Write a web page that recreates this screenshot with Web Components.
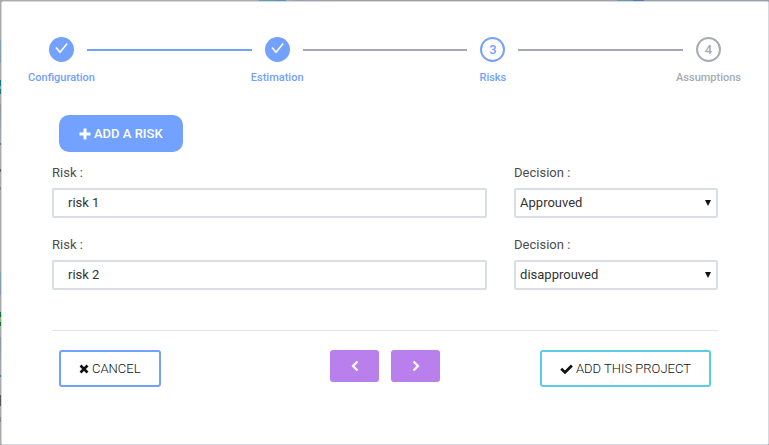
<!DOCTYPE html>
<html lang="en">
<head>
<meta charset="utf-8">
<title>Add a project</title>
<style>
  body { margin: 0; font-family: Roboto, "Liberation Sans", sans-serif; font-size: 13px; color: #444; }
</style>
</head>
<body>
<project-dialog>
  <step-list slot="steps">
    <step-item state="done" number="1">Configuration</step-item>
    <step-item state="done" number="2">Estimation</step-item>
    <step-item state="current" number="3">Risks</step-item>
    <step-item state="todo" number="4">Assumptions</step-item>
  </step-list>
  <action-button kind="solid" icon="plus" slot="toolbar">ADD A RISK</action-button>
  <risk-row value="risk 1" decision="Approuved"></risk-row>
  <risk-row value="risk 2" decision="disapprouved"></risk-row>
  <action-button kind="cancel" icon="cross" slot="start">CANCEL</action-button>
  <action-button kind="nav" icon="left" label="Previous" slot="nav"></action-button>
  <action-button kind="nav" icon="right" label="Next" slot="nav"></action-button>
  <action-button kind="confirm" icon="check" slot="end">ADD THIS PROJECT</action-button>
</project-dialog>

<script>
const shadow = (el, html) => { el.attachShadow({ mode: 'open' }).innerHTML = html; return el.shadowRoot; };

customElements.define('project-dialog', class extends HTMLElement {
  connectedCallback() {
    shadow(this, `
      <style>
        * { box-sizing: border-box; }
        /* dimmed page strip showing round the dialog */
        :host {
          display: flex; box-sizing: border-box; min-height: 100vh; padding: 1px 0 0 1px;
          background:
            linear-gradient(90deg, #ababab 259px, #5d9fae 259px 275px, #5f8fc0 275px 286px, #ababab 286px 293px, #9ca3ae 293px 321px, #a2a2a2 321px 617px, #5d9fae 617px 633px, #5579b0 633px 644px, #9b9fa5 644px) 0 0 / 100% 1px no-repeat,
            linear-gradient(#ababab 40px, #7ba6ad 40px, #8c96b0 63px, #ababab 63px 80px, #0f7b85 80px 86px, #8fa9ab 86px 89px, #0f7b85 89px 94px, #ababab 94px 104px, #8f979e 104px, #a5a9ae 143px, #4a70c4 143px 145px, #ababab 145px 169px, #666 169px 172px, #ababab 172px 187px, #888 187px 190px, #ababab 190px 272px, #7ba6ad 272px, #8c96b0 295px, #ababab 295px 312px, #12782f 312px 317px, #8fab95 317px 322px, #12782f 322px 326px, #ababab 326px 337px, #8f979e 337px, #a5a9ae 375px, #4a70c4 375px 377px, #ababab 377px 395px, #555 395px 406px, #ababab 406px 417px, #888 417px 422px, #ababab 422px) 0 0 / 1px 100% no-repeat,
            #a5a5a5;
        }
        main { flex: 1; min-width: 0; background: #fff; border: 1px solid #d5d8df; border-radius: 2px; padding: 35px 50px 56px; }
        .steps { margin: 0 -3px; }
        .toolbar { display: flex; padding: 30px 7px 13px; }
        .rows { display: grid; gap: 19px; }
        hr { border: 0; border-top: 1px solid #e3e4e6; margin: 40px 0 19px; }
        footer { display: grid; grid-template-columns: 1fr auto 1fr; align-items: start; padding: 0 7px; }
        nav { display: flex; gap: 12px; }
        .end { justify-self: end; }
      </style>
      <main>
        <div class="steps"><slot name="steps"></slot></div>
        <div class="toolbar"><slot name="toolbar"></slot></div>
        <div class="rows"><slot></slot></div>
        <hr>
        <footer>
          <div><slot name="start"></slot></div>
          <nav><slot name="nav"></slot></nav>
          <div class="end"><slot name="end"></slot></div>
        </footer>
      </main>`);
  }
});

customElements.define('step-list', class extends HTMLElement {
  connectedCallback() {
    shadow(this, `<style>:host { display: flex; }</style><slot></slot>`);
  }
});

customElements.define('step-item', class extends HTMLElement {
  connectedCallback() {
    const done = this.getAttribute('state') === 'done';
    const mark = done
      ? `<svg width="15" height="15" viewBox="0 0 15 15" aria-hidden="true"><path d="M2 6.6 6 11.2 13.2 2.6" fill="none" stroke="#fff" stroke-width="1.6"/></svg>`
      : this.getAttribute('number');
    shadow(this, `
      <style>
        :host { display: flex; flex: 0 0 auto; --tone: #73a1ff; --line: #a1a8b3; }
        :host(:not(:first-child)) { flex: 1 1 0; }
        :host([state="todo"]) { --tone: #a6abb4; }
        :host(:nth-child(2)) { --line: #73a1ff; }
        :host(:first-child) .line { display: none; }
        .line { flex: 1; height: 2px; margin: 12px 13px 0; background: var(--line); }
        .step { width: 25px; display: flex; flex-direction: column; align-items: center; gap: 8px; color: var(--tone); font-weight: 500; }
        .mark { box-sizing: border-box; width: 25px; height: 25px; border: 2px solid var(--tone); border-radius: 50%; display: flex; align-items: center; justify-content: center; font-size: 13px; line-height: 21px; }
        :host([state="done"]) .mark { background: var(--tone); align-items: flex-start; }
        .label { font-size: 11px; line-height: 15px; white-space: nowrap; }
        svg { flex: none; margin-top: 2px; }
      </style>
      <span class="line"></span>
      <div class="step"><span class="mark">${mark}</span><span class="label"><slot></slot></span></div>`);
  }
});

const icons = {
  plus: [12, 12, '<path d="M4.5 0.5h3v4h4v3h-4v4h-3v-4h-4v-3h4z" fill="currentColor"/>'],
  cross: [10, 10, '<path d="M1.500 1.500l7 7M8.500 1.500l-7 7" stroke="currentColor" stroke-width="2.600" fill="none"/>'],
  check: [13, 12, '<path d="M1.200 5.800 5 9.400 11.900 2.500" stroke="currentColor" stroke-width="2.800" fill="none"/>'],
  left: [8, 12, '<path d="M6.500 1.500 2 6l4.500 4.500" stroke="currentColor" stroke-width="2.200" fill="none"/>'],
  right: [8, 12, '<path d="M1.500 1.500 6 6l-4.500 4.500" stroke="currentColor" stroke-width="2.200" fill="none"/>']
};

customElements.define('action-button', class extends HTMLElement {
  connectedCallback() {
    const [w, h, art] = icons[this.getAttribute('icon')];
    const label = this.getAttribute('label');
    shadow(this, `
      <style>
        :host { display: block; }
        button {
          display: flex; align-items: center; justify-content: center; gap: 3px; box-sizing: border-box;
          height: 37px; padding: 0 18px; margin: 0; border: 2px solid #73a1ff; border-radius: 3px;
          background: #fff; color: #111; font: 300 13px/16px Roboto, "Liberation Sans", sans-serif; white-space: nowrap; cursor: pointer;
        }
        svg { flex: none; display: block; }
        :host([kind="solid"]) button { background: #73a1ff; color: #fff; border-radius: 10px; font-weight: 500; }
        :host([kind="confirm"]) button { border-color: #5bcde2; }
        :host([kind="nav"]) button { width: 49px; height: 32px; padding: 0; border: 0; background: #b97fec; color: #fff; }
      </style>
      <button type="button"${label ? ` aria-label="${label}"` : ''}>
        <svg width="${w}" height="${h}" viewBox="0 0 ${w} ${h}" aria-hidden="true">${art}</svg>
        ${label ? '' : '<span><slot></slot></span>'}
      </button>`);
  }
});

customElements.define('risk-row', class extends HTMLElement {
  connectedCallback() {
    const root = shadow(this, `
      <style>
        * { box-sizing: border-box; }
        :host { display: grid; grid-template-columns: 32fr 15fr; gap: 27px; }
        .field { min-width: 0; }
        label { display: block; line-height: 16px; margin-bottom: 7px; color: #4d4d4d; }
        input, select {
          display: block; width: 100%; height: 30px; margin: 0; border: 2px solid #d9dee5; border-radius: 2px;
          background: #fff; color: #333; font: 400 13px/16px Roboto, "Liberation Sans", sans-serif;
        }
        input { padding: 0 14px 1px; }
        select { appearance: none; padding: 0 20px 0 4px; }
        .pick { display: grid; align-items: center; }
        .pick > * { grid-area: 1 / 1; }
        svg { justify-self: end; margin-right: 7px; pointer-events: none; }
      </style>
      <div class="field"><label for="risk">Risk :</label><input id="risk" type="text"></div>
      <div class="field"><label for="decision">Decision :</label>
        <div class="pick">
          <select id="decision"><option>Approuved</option><option>disapprouved</option></select>
          <svg width="6" height="6" viewBox="0 0 6 6" aria-hidden="true"><path d="M0 0h6L3 6z" fill="#111"/></svg>
        </div>
      </div>`);
    root.querySelector('input').value = this.getAttribute('value');
    root.querySelector('select').value = this.getAttribute('decision');
  }
});
</script>
</body>
</html>
